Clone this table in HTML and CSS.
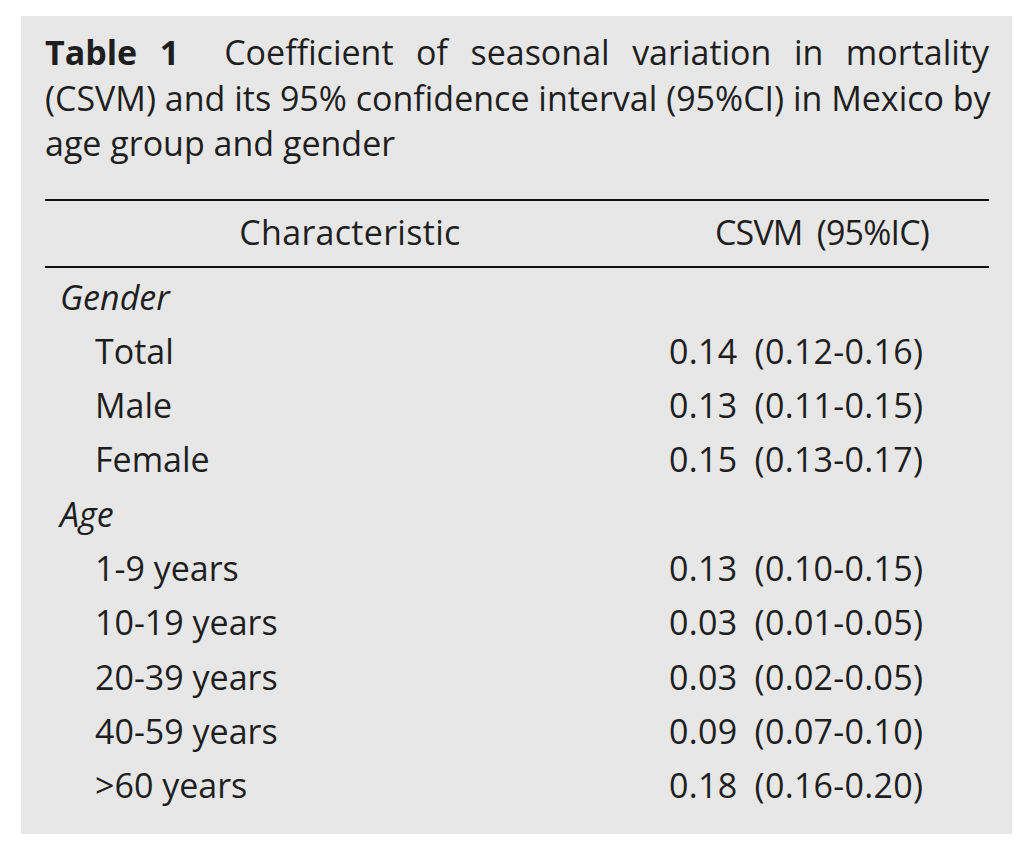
FILE: index.html
```html
<!DOCTYPE html>
<html>
<head>
<meta charset="utf-8">
<link rel="stylesheet" href="styles.css">
</head>
<body>
<div class="box">
  <div class="caption">
    <div class="line just"><b>Table 1</b>&nbsp; Coefficient of seasonal variation in mortality</div>
    <div class="line just">(CSVM) and its 95% confidence interval (95%CI) in Mexico by</div>
    <div class="line">age group and gender</div>
  </div>
  <table class="tbl">
    <thead>
      <tr><th class="c1">Characteristic</th><th class="c2">CSVM (95%IC)</th></tr>
    </thead>
    <tbody>
      <tr><td class="grp">Gender</td><td></td></tr>
      <tr><td class="item">Total</td><td class="val">0.14 (0.12-0.16)</td></tr>
      <tr><td class="item">Male</td><td class="val">0.13 (0.11-0.15)</td></tr>
      <tr><td class="item">Female</td><td class="val">0.15 (0.13-0.17)</td></tr>
      <tr><td class="grp">Age</td><td></td></tr>
      <tr><td class="item">1-9 years</td><td class="val">0.13 (0.10-0.15)</td></tr>
      <tr><td class="item">10-19 years</td><td class="val">0.03 (0.01-0.05)</td></tr>
      <tr><td class="item">20-39 years</td><td class="val">0.03 (0.02-0.05)</td></tr>
      <tr><td class="item">40-59 years</td><td class="val">0.09 (0.07-0.10)</td></tr>
      <tr><td class="item">&gt;60 years</td><td class="val">0.18 (0.16-0.20)</td></tr>
    </tbody>
  </table>
</div>
</body>
</html>
```
FILE: styles.css
```css
html, body {
  margin: 0;
  padding: 0;
  background: #ffffff;
}
body {
  font-family: "Open Sans", "Liberation Sans", sans-serif;
  color: #1e1e1e;
  font-size: 34px;
}
.box {
  margin: 16px 0 0 21px;
  width: 944px;
  padding: 14px 23px 22px 24px;
  background: #e7e7e7;
}
.caption .line {
  line-height: 45.5px;
  white-space: nowrap;
}
.caption .just {
  text-align: justify;
  text-align-last: justify;
}
.caption b {
  font-weight: 700;
}
.tbl {
  margin-top: 32px;
  width: 944px;
  border-collapse: collapse;
  table-layout: fixed;
}
.tbl th {
  font-weight: 400;
  height: 65px;
  padding: 0;
  line-height: 45.5px;
  border-top: 2px solid #111;
  border-bottom: 2px solid #111;
  text-align: center;
  vertical-align: middle;
}
.tbl .c1 { width: 610px; letter-spacing: 0.3px; }
.tbl .c2 { width: 334px; letter-spacing: -0.8px; word-spacing: 6px; }
.tbl td {
  padding: 0;
  height: 54.3px;
  line-height: 54.3px;
  white-space: nowrap;
}
.tbl tbody tr:first-child td {
  padding-top: 2px;
}
.tbl .grp {
  font-style: italic;
  padding-left: 15px;
}
.tbl .item {
  padding-left: 50px;
}
.tbl .val {
  padding-left: 14px;
  letter-spacing: 0.3px;
  word-spacing: 8px;
}
```
